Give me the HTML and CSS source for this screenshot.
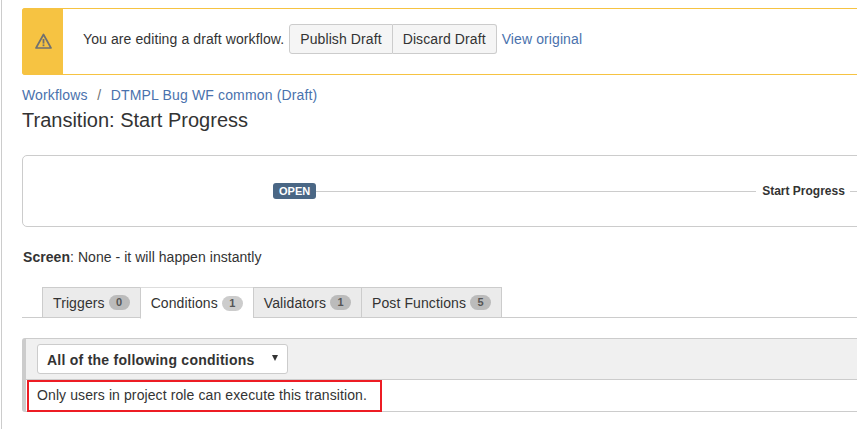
FILE: index.html
```html
<!DOCTYPE html>
<html lang="en">
<head>
<meta charset="utf-8">
<title>Transition: Start Progress</title>
<link rel="stylesheet" href="styles.css">
</head>
<body>
<main class="page">
  <section class="banner">
    <div class="banner-icon">
      <svg width="17" height="17" viewBox="0 0 17 17" fill="none" aria-hidden="true">
        <path d="M8.5 1.5 L16 15 H1 Z" stroke="#707070" stroke-width="1.7" stroke-linejoin="round"/>
        <rect x="7.6" y="6" width="1.8" height="4.6" fill="#707070"/>
        <rect x="7.6" y="11.4" width="1.8" height="1.8" fill="#707070"/>
      </svg>
    </div>
    <div class="banner-body">
      <span class="banner-text">You are editing a draft workflow.</span>
      <div class="btn-group">
        <button class="btn">Publish Draft</button>
        <button class="btn">Discard Draft</button>
      </div>
      <a class="link view-link" href="#">View original</a>
    </div>
  </section>

  <nav class="crumbs">
    <a class="link" href="#">Workflows</a>
    <span class="crumb-sep">/</span>
    <a class="link" href="#">DTMPL Bug WF common (Draft)</a>
  </nav>
  <h1 class="title">Transition: Start Progress</h1>

  <section class="diagram">
    <span class="status">OPEN</span>
    <span class="line line-a"></span>
    <span class="transition-name">Start Progress</span>
    <span class="line line-b"></span>
  </section>

  <p class="screen"><strong>Screen</strong>: None - it will happen instantly</p>

  <div class="tabs">
    <div class="tab">Triggers <span class="count">0</span></div>
    <div class="tab tab-active">Conditions <span class="count">1</span></div>
    <div class="tab">Validators <span class="count">1</span></div>
    <div class="tab tab-last">Post Functions <span class="count">5</span></div>
  </div>

  <section class="conditions">
    <div class="cond-head">
      <div class="select">
        <span>All of the following conditions</span>
        <span class="caret"></span>
      </div>
    </div>
    <div class="cond-row">
      <div class="cond-item">Only users in project role can execute this transition.</div>
    </div>
  </section>
</main>
</body>
</html>
```
FILE: styles.css
```css
html, body {
  margin: 0;
  padding: 0;
  background: #fff;
  overflow: hidden;
}
body {
  font-family: "Liberation Sans", Arial, sans-serif;
  font-size: 14px;
  letter-spacing: 0.1px;
  color: #333;
  width: 857px;
  height: 429px;
}
.page {
  box-sizing: border-box;
  width: 900px;
  height: 429px;
  margin-left: 1px;
  border-left: 1px solid #ccc;
  padding: 8px 0 0 20px;
}
.link {
  color: #4a72ad;
  text-decoration: none;
}
.banner {
  display: flex;
  height: 67px;
  box-sizing: border-box;
  border: 1px solid #f6c342;
  border-radius: 3px;
}
.banner-icon {
  box-sizing: border-box;
  margin: -1px 0 -1px -1px;
  padding-left: 1px;
  background: #f6c342;
  border-radius: 3px 0 0 3px;
  display: flex;
  align-items: center;
  justify-content: center;
  flex: none;
  width: 41px;
}
.banner-body {
  display: flex;
  align-items: center;
  padding: 0 0 5px 20px;
}
.banner-text {
  margin-right: 5px;
}
.btn-group {
  display: flex;
}
.btn {
  font: inherit;
  letter-spacing: inherit;
  color: #333;
  height: 30px;
  padding: 0 10px;
  background: #f5f5f5;
  border: 1px solid #ccc;
  border-radius: 3px 0 0 3px;
}
.btn + .btn {
  border-left: 0;
  border-radius: 0 3px 3px 0;
}
.view-link {
  margin-left: 5px;
}
.crumbs {
  margin-top: 12px;
  line-height: 17px;
  height: 17px;
  letter-spacing: 0.15px;
}
.crumb-sep {
  color: #707070;
  margin: 0 5.5px;
}
.title {
  margin: 4px 0 0;
  font-size: 20px;
  font-weight: 400;
  line-height: 24px;
  letter-spacing: 0;
}
.diagram {
  box-sizing: border-box;
  margin-top: 23px;
  height: 72px;
  border: 1px solid #ccc;
  border-radius: 5px;
  display: flex;
  align-items: center;
  padding-left: 250px;
}
.status {
  background: #4a6785;
  color: #fff;
  font-size: 11px;
  font-weight: 700;
  line-height: 16px;
  height: 16px;
  padding: 0 6px;
  border-radius: 3px;
  letter-spacing: 0;
  flex: none;
}
.line {
  height: 1px;
  background: #ccc;
  flex: none;
}
.line-a {
  width: 440px;
}
.line-b {
  width: 60px;
}
.transition-name {
  font-size: 12px;
  font-weight: 700;
  letter-spacing: 0;
  padding: 0 5px 0 6px;
  flex: none;
}
.screen {
  margin: 21px 0 0 1px;
  line-height: 18px;
  letter-spacing: 0.05px;
}
.tabs {
  display: flex;
  margin-top: 21px;
  padding-left: 20px;
  height: 31px;
  box-sizing: border-box;
  border-bottom: 1px solid #ccc;
}
.tab {
  box-sizing: border-box;
  height: 31px;
  padding: 0 10px;
  display: flex;
  align-items: center;
  gap: 4px;
  background: #ebebeb;
  border-top: 1px solid #ccc;
  border-bottom: 1px solid #ccc;
  border-left: 1px solid #ccc;
  color: #333;
}
.tab-last {
  border-right: 1px solid #ccc;
}
.tab-active {
  background: #fff;
  border-top-color: #ddd;
  border-bottom-color: #fff;
  height: 32px;
}
.count {
  min-width: 21px;
  height: 15px;
  box-sizing: border-box;
  border-radius: 8px;
  background: #bbb;
  font-size: 11px;
  font-weight: 700;
  line-height: 15px;
  text-align: center;
  color: #555;
}
.tab-active .count {
  background: #ccc;
}
.conditions {
  margin-top: 20px;
  box-sizing: border-box;
  height: 74px;
  border-left: 4px solid #ccc;
  border-radius: 3px 0 0 3px;
}
.cond-head {
  box-sizing: border-box;
  height: 42px;
  background: #f0f0f0;
  border-top: 1px solid #ccc;
  border-bottom: 1px solid #ccc;
  padding: 5px 0 0 11px;
}
.select {
  box-sizing: border-box;
  width: 251px;
  height: 30px;
  background: #fff;
  border: 1px solid #ccc;
  border-radius: 3px;
  font-weight: 700;
  display: flex;
  align-items: center;
  justify-content: space-between;
  padding: 2px 9px 0;
  letter-spacing: 0.25px;
}
.caret {
  width: 0;
  height: 0;
  border-left: 3.5px solid transparent;
  border-right: 3.5px solid transparent;
  border-top: 6px solid #333;
  margin: 0 0 5px;
}
.cond-row {
  box-sizing: border-box;
  height: 32px;
  border-bottom: 1px solid #ccc;
}
.cond-item {
  box-sizing: border-box;
  width: 355px;
  height: 32px;
  margin-left: 1px;
  border: 2px solid #ed1c24;
  padding-left: 8px;
  line-height: 26px;
}
```
